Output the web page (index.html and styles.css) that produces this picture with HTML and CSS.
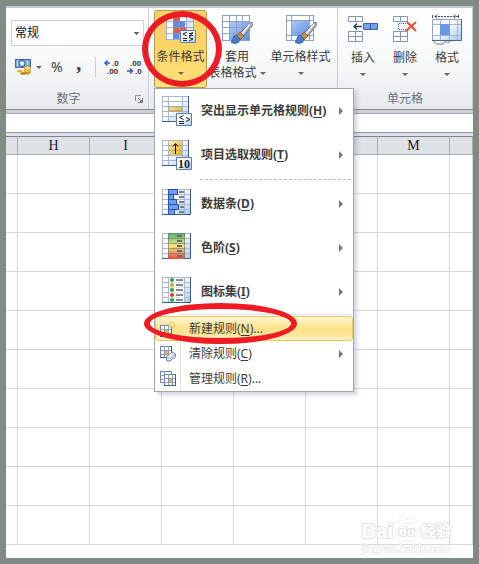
FILE: index.html
```html
<!DOCTYPE html>
<html lang="zh-CN">
  <head>
    <meta charset="UTF-8" />
    <title>条件格式 - 新建规则</title>
    <link rel="stylesheet" href="styles.css">
  </head>
  <body>
    <!-- shared gradients and icon parts -->
    <svg class="defs" aria-hidden="true">
      <defs>
        <linearGradient id="cell" x1="0" y1="0" x2="1" y2="1">
          <stop offset="0.4" stop-color="#ffffff" />
          <stop offset="1" stop-color="#9fc6f8" />
        </linearGradient>
        <linearGradient id="blue" x1="0" y1="0" x2="1" y2="1">
          <stop offset="0" stop-color="#b4ccf8" />
          <stop offset="1" stop-color="#5b8ae4" />
        </linearGradient>
        <linearGradient id="gold" x1="0" y1="0" x2="1" y2="1">
          <stop offset="0" stop-color="#fbf0b4" />
          <stop offset="1" stop-color="#dbb024" />
        </linearGradient>
        <linearGradient id="scale" x1="0" y1="0" x2="0" y2="1">
          <stop offset="0" stop-color="#4fb56a" />
          <stop offset="0.5" stop-color="#f6e67a" />
          <stop offset="1" stop-color="#e84a42" />
        </linearGradient>
        <symbol id="grid" viewBox="0 0 30 30">
          <path d="M1 1h26v25H1z" fill="url(#cell)" />
          <path d="M0 .5h27M0 5.500h27M0 10.500h27M0 15.500h27M0 20.500h27M.5 0v26M6.500 0v26M20.500 0v26" fill="none" stroke="#a9b8d2" />
          <path d="M26.500 0v25.500H0" fill="none" stroke="#3d5c88" />
        </symbol>
        <symbol id="badge" viewBox="0 0 16 13">
          <path d="M.5.5h15v12H.5z" fill="url(#cell)" stroke="#5f7ca8" />
        </symbol>
        <symbol id="brush" viewBox="0 0 22 22">
          <path d="M20 0c2 0 2 2 1 4l-8 10-4-3z" fill="#a9aeb6" stroke="#60656e" stroke-width="0.800" />
          <path d="M19 2l-8 10" stroke="#f6f6f6" stroke-width="1.500" />
          <path d="M9 10l4 4-4 4-4-3z" fill="#c58b4a" stroke="#8a5b2b" stroke-width="0.800" />
          <path d="M5 13c-4 1-2 5-5 7 4 3 9 1 9-3z" fill="#4a7fc8" stroke="#2d5796" stroke-width="0.800" />
        </symbol>
        <symbol id="small-grid" viewBox="0 0 16 16">
          <path d="M.5 2.500h11v11H.5z" fill="#fff" stroke="#6c82a6" />
          <path d="M0 6.500h12M0 10.500h12M4.500 2v12M8.500 2v12" stroke="#8c9dba" />
          <path d="M5 7h3v3H5z" fill="#e3b33b" />
          <path d="M11.500 2v11.500H0" fill="none" stroke="#3d5c88" />
        </symbol>
      </defs>
    </svg>

    <div class="window">
      <div class="ribbon">
        <section class="group number">
          <select class="number-format" aria-label="数字格式">
            <option>常规</option>
          </select>
          <div class="number-tools">
            <button class="tool" aria-label="会计数字格式">
              <svg width="16" height="16" viewBox="0 0 16 16">
                <path d="M0 0h16v9H0z" fill="#3d68b4" />
                <path d="M1 1h14v7H1z" fill="#7ea4de" />
                <ellipse cx="7" cy="4.500" rx="3" ry="3" fill="#dfe9f8" stroke="#244e96" />
                <path d="M2.500 2v5M12.500 2v4" stroke="#dfe9f8" />
                <ellipse cx="12.500" cy="13.500" rx="3" ry="2" fill="#d69a18" />
                <ellipse cx="12.500" cy="11.500" rx="3" ry="2" fill="#f7c84a" stroke="#a76f08" stroke-width="0.600" />
                <ellipse cx="12.500" cy="9" rx="3" ry="2" fill="#ffe08a" stroke="#a76f08" stroke-width="0.600" />
                <ellipse cx="5" cy="12" rx="3" ry="1.300" fill="#e9b531" />
                <ellipse cx="8" cy="14.500" rx="3" ry="1.300" fill="#b17b0e" />
              </svg>
              <span class="caret"></span>
            </button>
            <button class="tool percent">%</button>
            <button class="tool comma">,</button>
            <button class="tool decimals" aria-label="增加小数位数">
              <svg width="16" height="16" viewBox="0 0 16 16">
                <path d="M1 4h5M3.500 1.500L1 4l2.500 2.500" fill="none" stroke="#2c5fc0" stroke-width="1.500" />
                <text x="8" y="7">.0</text>
                <text x="3" y="15">.00</text>
              </svg>
            </button>
            <button class="tool" aria-label="减少小数位数">
              <svg width="16" height="16" viewBox="0 0 16 16">
                <text x="3" y="7">.00</text>
                <path d="M0 12h5.500M3 9.500L5.500 12 3 14.500" fill="none" stroke="#2c5fc0" stroke-width="1.500" />
                <text x="8" y="15">.0</text>
              </svg>
            </button>
          </div>
          <div class="group-title">
            数字
            <button class="launcher" aria-label="数字设置">
              <svg width="8" height="8" viewBox="0 0 8 8">
                <path d="M.5 6V.5H6" fill="none" stroke="#8b929c" />
                <path d="M3 3l3 3M7.500 3v4.500H3" fill="none" stroke="#777e88" />
                <path d="M5 5h3v3H5z" fill="#777e88" />
              </svg>
            </button>
          </div>
        </section>

        <section class="group styles">
          <div class="dropdown">
            <button class="big-button active">
              <svg width="30" height="30" viewBox="0 0 30 30">
                <path d="M0 0h28v25H0z" fill="#fff" />
                <path d="M20 0h8v25h-8z" fill="#dce9fc" />
                <path d="M7 0h7v6H7zM7 12h13v6H7z" fill="#f0553f" />
                <path d="M7 6h12v6H7zM7 18h6v6H7z" fill="#5d8be8" />
                <path d="M0 .5h28M0 6.500h28M0 12.500h28M0 18.500h28M0 24.500h28M.5 0v25M7.500 0v25M13.500 0v25M20.500 0v25M27.500 0v25" stroke="#7f96bd" stroke-opacity="0.700" />
                <use href="#badge" x="14" y="15" width="16" height="13" />
                <path d="M21 17l-4 2 4 2M17 23.500h4M17 25.500h4M23 18.500h4M23 20.500h4M26.500 17l-3 5M23 22.500l4 1.500-4 2" fill="none" stroke="#222" />
              </svg>
              <span>条件格式</span>
              <span class="caret"></span>
            </button>
            <span class="ring ring-button"></span>

            <div class="menu">
              <button class="menu-item">
                <svg width="30" height="30" viewBox="0 0 30 30">
                  <use href="#grid" width="30" height="30" />
                  <path d="M7 11h13v4H7z" fill="url(#gold)" stroke="#a9872c" stroke-width="0.500" />
                  <use href="#badge" x="14" y="17" width="16" height="13" />
                  <path d="M21.500 19.500l-4 2 4 2M17 25.500h5M17 27.500h5M24 21.500l4 2-4 2" fill="none" stroke="#222" />
                </svg>
                <span>突出显示单元格规则(<u>H</u>)</span>
                <i class="arrow"></i>
              </button>
              <button class="menu-item">
                <svg width="30" height="30" viewBox="0 0 30 30">
                  <use href="#grid" width="30" height="30" />
                  <path d="M7 1h13v14H7z" fill="url(#gold)" />
                  <path d="M7 5.500h13M7 10.500h13" stroke="#c9a63a" />
                  <path d="M13.500 14V4M11 6.500L13.500 3.500 16 6.500" fill="none" stroke="#111" />
                  <use href="#badge" x="14" y="17" width="16" height="13" />
                  <text class="ten" x="16" y="28">10</text>
                </svg>
                <span>项目选取规则(<u>T</u>)</span>
                <i class="arrow"></i>
              </button>
              <hr class="dashed" />
              <button class="menu-item">
                <svg width="30" height="30" viewBox="0 0 30 30">
                  <g id="data-grid">
                    <path d="M1 1h28v25H1z" fill="url(#cell)" />
                    <path d="M0 .5h29M0 5.500h29M0 10.500h29M0 15.500h29M0 20.500h29M.5 0v26M6.500 0v26M22.500 0v26" stroke="#a9b8d2" />
                    <path d="M28.500 0v25.500H0" fill="none" stroke="#3d5c88" />
                  </g>
                  <path d="M6.500.5h9v5h-4v5h3v5h2v5h-4v5h-6z" fill="#6d9cf0" stroke="#2850a8" />
                  <path d="M7 5.500h5M7 10.500h5M7 15.500h7M7 20.500h6" stroke="#2850a8" />
                  <path d="M17 3h5M17 8h5M17 13h5M18 18h4M17 23h5" stroke="#777d88" stroke-width="2" />
                </svg>
                <span>数据条(<u>D</u>)</span>
                <i class="arrow"></i>
              </button>
              <button class="menu-item">
                <svg width="30" height="30" viewBox="0 0 30 30">
                  <use href="#data-grid" />
                  <path d="M6 0h17v26H6z" fill="url(#scale)" />
                  <path d="M6 .5h17M6 5.500h17M6 10.500h17M6 15.500h17M6 20.500h17M6.500 0v26M22.500 0v26" stroke="#66727e" stroke-opacity="0.600" />
                  <path d="M15 3h5M15 8h5M15 13h5M15 18h5M15 23h5" stroke="#666a70" stroke-width="2" />
                </svg>
                <span>色阶(<u>S</u>)</span>
                <i class="arrow"></i>
              </button>
              <button class="menu-item">
                <svg width="30" height="30" viewBox="0 0 30 30">
                  <use href="#data-grid" />
                  <path d="M7 1h15v24H7z" fill="#fff" />
                  <path d="M7 5.500h15M7 10.500h15M7 15.500h15M7 20.500h15" stroke="#dde3ec" />
                  <circle cx="10" cy="3" r="2" fill="#2da34a" />
                  <circle cx="10" cy="8" r="2" fill="#b5b50c" />
                  <circle cx="10" cy="13" r="2" fill="#2da34a" />
                  <circle cx="10" cy="18" r="2" fill="#ea3a24" />
                  <circle cx="10" cy="23" r="2" fill="#2da34a" />
                  <path d="M14 3h7M14 8h7M14 13h7M14 18h7M14 23h7" stroke="#858a94" stroke-width="2" />
                </svg>
                <span>图标集(<u>I</u>)</span>
                <i class="arrow"></i>
              </button>
              <hr />
              <button class="menu-item small selected">
                <svg width="16" height="16" viewBox="0 0 16 16">
                  <use href="#small-grid" y="2" width="16" height="16" />
                  <path d="M12 0v8M8 4h8M9.500 1.500l5 5M14.500 1.500l-5 5" stroke="#f2c029" />
                  <circle cx="12" cy="4" r="1.500" fill="#fff8c8" />
                </svg>
                <span>新建规则(<u>N</u>)...</span>
                <span class="ring ring-item"></span>
              </button>
              <button class="menu-item small">
                <svg width="16" height="16" viewBox="0 0 16 16">
                  <use href="#small-grid" y="-2" width="16" height="16" />
                  <path d="M6 11l6-5 3.500 2v2.500L10 15H7z" fill="#e8edf5" stroke="#6c7f9e" />
                  <path d="M6 11.500l4 1 5-4" fill="none" stroke="#9babc4" />
                </svg>
                <span>清除规则(<u>C</u>)</span>
                <i class="arrow"></i>
              </button>
              <button class="menu-item small">
                <svg width="16" height="16" viewBox="0 0 16 16">
                  <path d="M.5.5h11v11H.5z" fill="#fff" stroke="#6c82a6" />
                  <path d="M0 4.500h12M0 8.500h12M4.500 0v12" stroke="#8c9dba" />
                  <use href="#small-grid" x="4" y="1" width="16" height="16" />
                </svg>
                <span>管理规则(<u>R</u>)...</span>
              </button>
            </div>
          </div>

          <button class="big-button table-style">
            <svg width="30" height="30" viewBox="0 0 30 30">
              <path d="M0 0h28v26H0z" fill="#fff" />
              <path d="M7 6h21v20H7z" fill="url(#blue)" />
              <path d="M0 .5h28M0 6.500h28M0 12.500h28M0 18.500h28M0 25.500h28M.5 0v26M7.500 0v26M14.500 0v26M20.500 0v26M27.500 0v26" stroke="#8ba2c4" />
              <use href="#brush" x="9" y="7" width="22" height="22" />
            </svg>
            <span>套用<br />表格格式 <span class="caret"></span></span>
          </button>
          <button class="big-button cell-style">
            <svg width="30" height="30" viewBox="0 0 30 30">
              <path d="M0 0h28v26H0z" fill="#fff" />
              <path d="M5 5h19v16H5z" fill="url(#blue)" />
              <path d="M0 .5h28M0 5.500h28M0 20.500h28M0 25.500h28M.5 0v26M5.500 0v26M23.500 0v26M27.500 0v26" stroke="#8ba2c4" />
              <use href="#brush" x="9" y="7" width="22" height="22" />
            </svg>
            <span>单元格样式</span>
            <span class="caret"></span>
          </button>
        </section>

        <section class="group cells">
          <div class="cell-buttons">
            <button class="big-button">
              <svg width="30" height="30" viewBox="0 0 30 30">
                <path d="M.5.5h14v5H.5zM7.500 0v6M.5 15.500h14v10H.5zM7.500 15v11M0 20.500h15" fill="#fff" stroke="#8296b4" />
                <path d="M15.500 7.500h14v6h-14z" fill="#76a0ee" stroke="#3f62a4" />
                <path d="M22.500 8v5" stroke="#3f62a4" />
                <path d="M14 10.500H6M9 7.500l-3 3 3 3" fill="none" stroke="#2f4460" stroke-width="1.500" />
              </svg>
              <span>插入</span>
              <span class="caret"></span>
            </button>
            <button class="big-button">
              <svg width="30" height="30" viewBox="0 0 30 30">
                <path d="M3.500.5h14v5h-14zM10.500 0v6M3.500 15.500h14v10h-14zM10.500 15v11M3 20.500h15" fill="#fff" stroke="#8296b4" />
                <path d="M18 7.500H8.500v6H18" fill="none" stroke="#3465b8" stroke-dasharray="1 1" />
                <path d="M17 6l9 9M26 6l-10 9" stroke="#ef4b2d" stroke-width="2" />
              </svg>
              <span>删除</span>
              <span class="caret"></span>
            </button>
            <button class="big-button">
              <svg width="30" height="30" viewBox="0 0 30 30">
                <path d="M3 .5h24" stroke="#3b4d68" stroke-dasharray="2 1" />
                <path d="M.5-1v3M26.500-1v3M5-1.500L3 .5l2 2M22-1.500l2 2-2 2" fill="none" stroke="#3b4d68" />
                <path d="M2.500 22v4l2 2h7l2-3 2 2 3-2" fill="#fff" stroke="#5f7696" />
                <path d="M.5 3.500h29v21H.5z" fill="url(#cell)" stroke="#8ba2c4" />
                <path d="M0 8.500h30M0 19.500h30M8.500 3v22M17.500 3v22M25.500 3v22" stroke="#a4b4cc" />
                <path d="M8 8h10v11H8z" fill="#6c98ea" />
                <path d="M29.500 3v21.500H0" fill="none" stroke="#4e678d" />
              </svg>
              <span>格式</span>
              <span class="caret"></span>
            </button>
          </div>
          <div class="group-title">单元格</div>
        </section>
      </div>

      <div class="formula-bar"></div>

      <div class="sheet">
        <table>
          <colgroup>
            <col class="edge" /><col class="col" /><col class="col" /><col class="col" /><col class="col" /><col class="col" /><col class="col" /><col />
          </colgroup>
          <thead>
            <tr><th></th><th>H</th><th>I</th><th></th><th></th><th></th><th>M</th><th></th></tr>
          </thead>
          <tbody>
            <tr><td></td><td></td><td></td><td></td><td></td><td></td><td></td><td></td></tr>
            <tr><td></td><td></td><td></td><td></td><td></td><td></td><td></td><td></td></tr>
            <tr><td></td><td></td><td></td><td></td><td></td><td></td><td></td><td></td></tr>
            <tr><td></td><td></td><td></td><td></td><td></td><td></td><td></td><td></td></tr>
            <tr><td></td><td></td><td></td><td></td><td></td><td></td><td></td><td></td></tr>
            <tr><td></td><td></td><td></td><td></td><td></td><td></td><td></td><td></td></tr>
            <tr><td></td><td></td><td></td><td></td><td></td><td></td><td></td><td></td></tr>
            <tr><td></td><td></td><td></td><td></td><td></td><td></td><td></td><td></td></tr>
            <tr><td></td><td></td><td></td><td></td><td></td><td></td><td></td><td></td></tr>
            <tr><td></td><td></td><td></td><td></td><td></td><td></td><td></td><td></td></tr>
          </tbody>
        </table>
        <div class="watermark">
          <div class="brand">
            <span>Bai</span>
            <span class="paw">
              <svg width="28" height="28" viewBox="0 0 28 28">
                <ellipse cx="4" cy="11" rx="3" ry="4" />
                <ellipse cx="10" cy="5" rx="3" ry="4" />
                <ellipse cx="18" cy="5" rx="3" ry="4" />
                <ellipse cx="24" cy="11" rx="3" ry="4" />
                <path d="M14 10c4 0 5 4 8 6 5 5 2 11-3 11-3 0-7-1-10 0-6 1-9-6-4-11 3-3 5-6 9-6z" />
              </svg>
              <span class="du">du</span>
            </span>
            <span class="name">经验</span>
          </div>
          <div class="site">jingyan.baidu.com</div>
        </div>
      </div>
    </div>
  </body>
</html>
```
FILE: styles.css
```css
* {
  box-sizing: border-box;
}
body {
  margin: 0;
  padding: 6px;
  background-color: #7f8c84;
  font-family: "Noto Sans", "Noto Sans CJK SC", sans-serif;
  font-size: 12px;
  line-height: 16px;
  color: #3b3b3b;
}
button {
  font: inherit;
  color: inherit;
  padding: 0;
  border: 0;
  background: none;
}
svg {
  display: block;
  flex: none;
  overflow: visible;
}
.defs {
  position: absolute;
  width: 0;
  height: 0;
}
.window {
  display: flex;
  flex-direction: column;
  height: calc(100vh - 12px);
  overflow: hidden;
  background-color: #fff;
}

/* ribbon */
.ribbon {
  display: flex;
  height: 104px;
  border-top: 2px solid #c3cad6;
  border-bottom: 1px solid #85888e;
  background: linear-gradient(#ffffff, #f8f9fb 50%, #e8eaee);
}
.group {
  display: flex;
  border-right: 1px solid #c9cdd4;
}
.number {
  flex-direction: column;
  width: 143px;
  padding: 12px 4px 0 5px;
}
.number-format {
  appearance: none;
  height: 26px;
  padding: 0 3px;
  border: 1px solid #cdd2da;
  border-radius: 0;
  font: inherit;
  color: #111;
  background: linear-gradient(#666, #666) no-repeat right 4px top 11px / 5px 1px,
    linear-gradient(#666, #666) no-repeat right 5px top 12px / 3px 1px,
    linear-gradient(#666, #666) no-repeat right 6px top 13px / 1px 1px, #fff;
}
.number-tools {
  display: flex;
  align-items: center;
  height: 42px;
  padding-left: 4px;
}
.tool {
  display: flex;
  align-items: center;
  gap: 5px;
}
.tool text {
  font: bold 8px "Liberation Sans", sans-serif;
  fill: #333;
}
.percent {
  margin-left: 9px;
  font-size: 14px;
}
.comma {
  width: 32px;
  justify-content: center;
  font: bold 20px/16px "Liberation Serif", serif;
  padding-bottom: 8px;
}
.decimals {
  padding: 2px 7px 2px 8px;
  border-left: 1px solid #c9cdd4;
}
.group-title {
  display: flex;
  justify-content: center;
  position: relative;
  margin-top: auto;
  padding-bottom: 2px;
  color: #68707e;
}
.number .group-title {
  padding-right: 18px;
}
.launcher {
  position: absolute;
  right: 1px;
  top: 4px;
}
.caret {
  display: inline-block;
  border: 3px solid transparent;
  border-top-color: #666;
  border-bottom: 0;
  vertical-align: middle;
}
.styles {
  width: 189px;
  padding: 2px 0 0 5px;
}
.dropdown {
  position: relative;
}
.big-button {
  display: flex;
  flex-direction: column;
  align-items: center;
  height: 78px;
  padding-top: 5px;
  white-space: nowrap;
}
.big-button svg {
  margin-bottom: 4px;
}
.big-button > .caret {
  margin-top: 7px;
}
.active {
  width: 53px;
  padding-top: 4px;
  border: 1px solid #b99a4b;
  border-radius: 3px;
  background: linear-gradient(#f9d067, #fcd567 50%, #ffe27a);
}
.table-style {
  width: 60px;
}
.cell-style {
  width: 67px;
}
.cells {
  flex: 1;
  flex-direction: column;
  padding-top: 3px;
}
.cell-buttons {
  display: flex;
  padding-left: 4px;
}
.cell-buttons .big-button {
  width: 42px;
  height: 74px;
}

/* conditional formatting menu */
.menu {
  position: absolute;
  z-index: 2;
  top: 78px;
  left: 0;
  width: 200px;
  border: 1px solid #a2a6b2;
  background-color: #fff;
  box-shadow: 3px 3px 4px rgba(90, 90, 140, 0.25);
}
.menu hr {
  height: 1px;
  margin: 0 1px 1px 26px;
  border: 0;
  background-color: #e0e2e5;
}
.menu .dashed {
  height: 0;
  margin: 2px 2px 2px 45px;
  border-top: 1px dashed #bbb;
  background: none;
}
.menu-item {
  display: flex;
  align-items: center;
  gap: 9px;
  width: 100%;
  height: 44px;
  padding: 0 10px 0 7px;
  font-weight: bold;
  text-align: left;
}
.menu-item u {
  text-underline-offset: 2px;
}
.ten {
  font: bold 12px "Liberation Serif", serif;
  fill: #222;
}
.arrow {
  margin-left: auto;
  border: 4px solid transparent;
  border-left-color: #777;
  border-right: 0;
}
.small {
  height: 25px;
  padding-left: 5px;
  gap: 13px;
  font-weight: normal;
  background: linear-gradient(#e0e2e5, #e0e2e5) no-repeat 25px 0 / 1px 100%;
}
.selected {
  position: relative;
  border: 1px solid #efca56;
  border-radius: 3px;
  padding-left: 4px;
  background: linear-gradient(#fff6d6, #fde288 50%, #fce59a 75%, #fff3c4);
}

/* red marks */
.ring {
  position: absolute;
  z-index: 3;
  border: 6px solid #ed1c24;
  border-radius: 50%;
  pointer-events: none;
}
.ring-button {
  top: 1px;
  left: -12px;
  width: 80px;
  height: 76px;
}
.ring-item {
  top: -14px;
  left: -12px;
  width: 153px;
  height: 41px;
}

/* sheet */
.formula-bar {
  height: 26px;
  border-top: 3px solid #cdd0d8;
  border-bottom: 3px solid #dfe2ee;
  background-color: #fff;
  box-shadow: inset 0 1px #a0a3aa, inset 0 -1px #929cab;
}
.sheet {
  position: relative;
  flex: 1;
  overflow: hidden;
}
table {
  width: 100%;
  table-layout: fixed;
  border-spacing: 0;
}
.edge {
  width: 12px;
}
.col {
  width: 72px;
}
th {
  height: 19px;
  padding: 0;
  border: solid #a9adb3;
  border-width: 1px 1px 1px 0;
  border-top-color: #7e8186;
  background-color: #dee1e6;
  font: 14px/17px "Liberation Serif", serif;
  color: #222;
}
td {
  height: 39px;
  padding: 0;
  border: solid #d9d9d9;
  border-width: 0 1px 1px 0;
}
.watermark {
  position: absolute;
  right: 22px;
  bottom: 4px;
  color: #fff;
  -webkit-text-stroke: 2px #e4e4e4;
  paint-order: stroke;
}
.brand {
  display: flex;
  align-items: flex-end;
  font: bold 20px/22px "Liberation Sans", "Noto Sans CJK SC", sans-serif;
}
.name {
  font-size: 15px;
}
.paw {
  position: relative;
}
.paw svg {
  fill: #fff;
  stroke: #dedede;
}
.du {
  position: absolute;
  left: 6px;
  bottom: -1px;
  font-size: 13px;
}
.site {
  font: 11px/12px "Liberation Sans", sans-serif;
  -webkit-text-stroke: 1px #e2e2e2;
}
```
